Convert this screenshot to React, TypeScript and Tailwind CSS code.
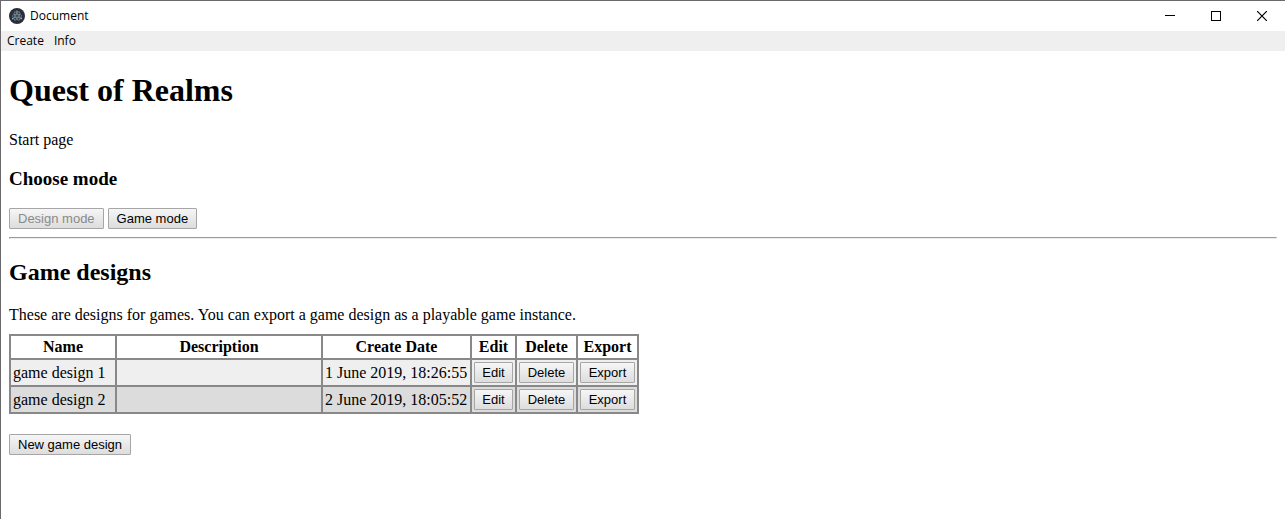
import type { ButtonHTMLAttributes } from "react";

const designs = [
  { name: "game design 1", description: "", created: "1 June 2019, 18:26:55" },
  { name: "game design 2", description: "", created: "2 June 2019, 18:05:52" },
];

const columns = [
  { label: "Name", width: "w-[106px]" },
  { label: "Description", width: "w-[206px]" },
  { label: "Create Date", width: "w-[149px]" },
  { label: "Edit", width: "w-[45px]" },
  { label: "Delete", width: "w-[61px]" },
  { label: "Export", width: "w-[61px]" },
];

function Button({ className = "", ...props }: ButtonHTMLAttributes<HTMLButtonElement>) {
  return (
    <button
      type="button"
      className={`h-[21px] whitespace-nowrap rounded-[1px] border border-[#a6a6a6] bg-linear-to-b from-[#f6f6f6] to-[#dddddd] text-center font-['Liberation_Sans',sans-serif] text-[13px] leading-[19px] text-black disabled:text-[#8a8a8a] ${className}`}
      {...props}
    />
  );
}

function AppIcon() {
  return (
    <svg viewBox="0 0 16 16" className="size-4" aria-hidden="true">
      <circle cx="8" cy="8" r="8" fill="#2b2e3a" />
      <g fill="none" stroke="#9fc4cc" strokeWidth="0.7" opacity="0.7">
        <ellipse cx="8" cy="8" rx="4.8" ry="1.8" />
        <ellipse cx="8" cy="8" rx="4.8" ry="1.8" transform="rotate(60 8 8)" />
        <ellipse cx="8" cy="8" rx="4.8" ry="1.8" transform="rotate(120 8 8)" />
      </g>
      <g fill="#9fc4cc">
        <circle cx="8" cy="8" r="0.6" />
        <circle cx="3.8" cy="10.6" r="0.8" />
        <circle cx="12.2" cy="10.4" r="0.8" />
        <circle cx="8" cy="3.2" r="0.7" />
      </g>
    </svg>
  );
}

function TitleBar() {
  const control = "flex h-[30px] w-[46px] items-center justify-center";
  return (
    <header className="flex h-[30px] items-center justify-between pl-2 font-['Open_Sans',sans-serif] text-xs">
      <div className="flex items-center gap-[5px]">
        <AppIcon />
        <span>Document</span>
      </div>
      <div className="flex">
        <button type="button" aria-label="Minimize" className={control}>
          <svg viewBox="0 0 10 10" className="size-[10px]" shapeRendering="crispEdges">
            <path d="M0 4.5H10" stroke="#000" fill="none" />
          </svg>
        </button>
        <button type="button" aria-label="Maximize" className={control}>
          <svg viewBox="0 0 10 10" className="size-[10px]" shapeRendering="crispEdges">
            <path d="M.5 .5H9.5V9.5H.5Z" stroke="#000" fill="none" />
          </svg>
        </button>
        <button type="button" aria-label="Close" className={control}>
          <svg viewBox="0 0 10 10" className="size-[10px]">
            <path d="M0 0L10 10M10 0L0 10" stroke="#000" strokeWidth="1.2" fill="none" />
          </svg>
        </button>
      </div>
    </header>
  );
}

export default function App() {
  return (
    <div className="min-h-screen border-l border-t border-[#6b696b] bg-white text-black">
      <TitleBar />
      <nav className="flex h-5 items-center gap-[10px] bg-[#efefef] pl-[6px] font-['Open_Sans',sans-serif] text-xs">
        <button type="button">Create</button>
        <button type="button">Info</button>
      </nav>
      <main className="px-2 font-['Liberation_Serif',serif] text-base leading-[18px]">
        <h1 className="mt-[21px] text-[32px] font-bold leading-[37px]">Quest of Realms</h1>
        <p className="mt-[22px]">Start page</p>
        <h3 className="mt-5 text-[19px] font-bold leading-5">Choose mode</h3>
        <div className="mt-[19px] flex gap-1">
          <Button disabled className="px-2">Design mode</Button>
          <Button className="px-2">Game mode</Button>
        </div>
        <hr className="mt-2 h-[2px] border border-[#eeeeee] border-l-[#9a9a9a] border-t-[#9a9a9a]" />
        <h2 className="mt-5 text-2xl font-bold leading-[27px]">Game designs</h2>
        <p className="mt-5">These are designs for games. You can export a game design as a playable game instance.</p>
        <table className="mt-[10px] w-[630px] table-fixed border-collapse border-2 border-[#888888]">
          <colgroup>
            {columns.map((c) => (
              <col key={c.label} className={c.width} />
            ))}
          </colgroup>
          <thead>
            <tr>
              {columns.map((c) => (
                <th key={c.label} scope="col" className="border-2 border-[#888888] p-[2px] text-center font-bold">
                  {c.label}
                </th>
              ))}
            </tr>
          </thead>
          <tbody>
            {designs.map((d) => (
              <tr key={d.name} className="odd:bg-[#efefef] even:bg-[#dcdcdc]">
                <td className="border-2 border-[#888888] p-[2px]">{d.name}</td>
                <td className="border-2 border-[#888888] p-[2px]">{d.description}</td>
                <td className="whitespace-nowrap border-2 border-[#888888] p-[2px]">{d.created}</td>
                {["Edit", "Delete", "Export"].map((action) => (
                  <td key={action} className="border-2 border-[#888888] p-[2px]">
                    <Button className="block w-full">{action}</Button>
                  </td>
                ))}
              </tr>
            ))}
          </tbody>
        </table>
        <Button className="mt-5 px-2">New game design</Button>
      </main>
    </div>
  );
}
